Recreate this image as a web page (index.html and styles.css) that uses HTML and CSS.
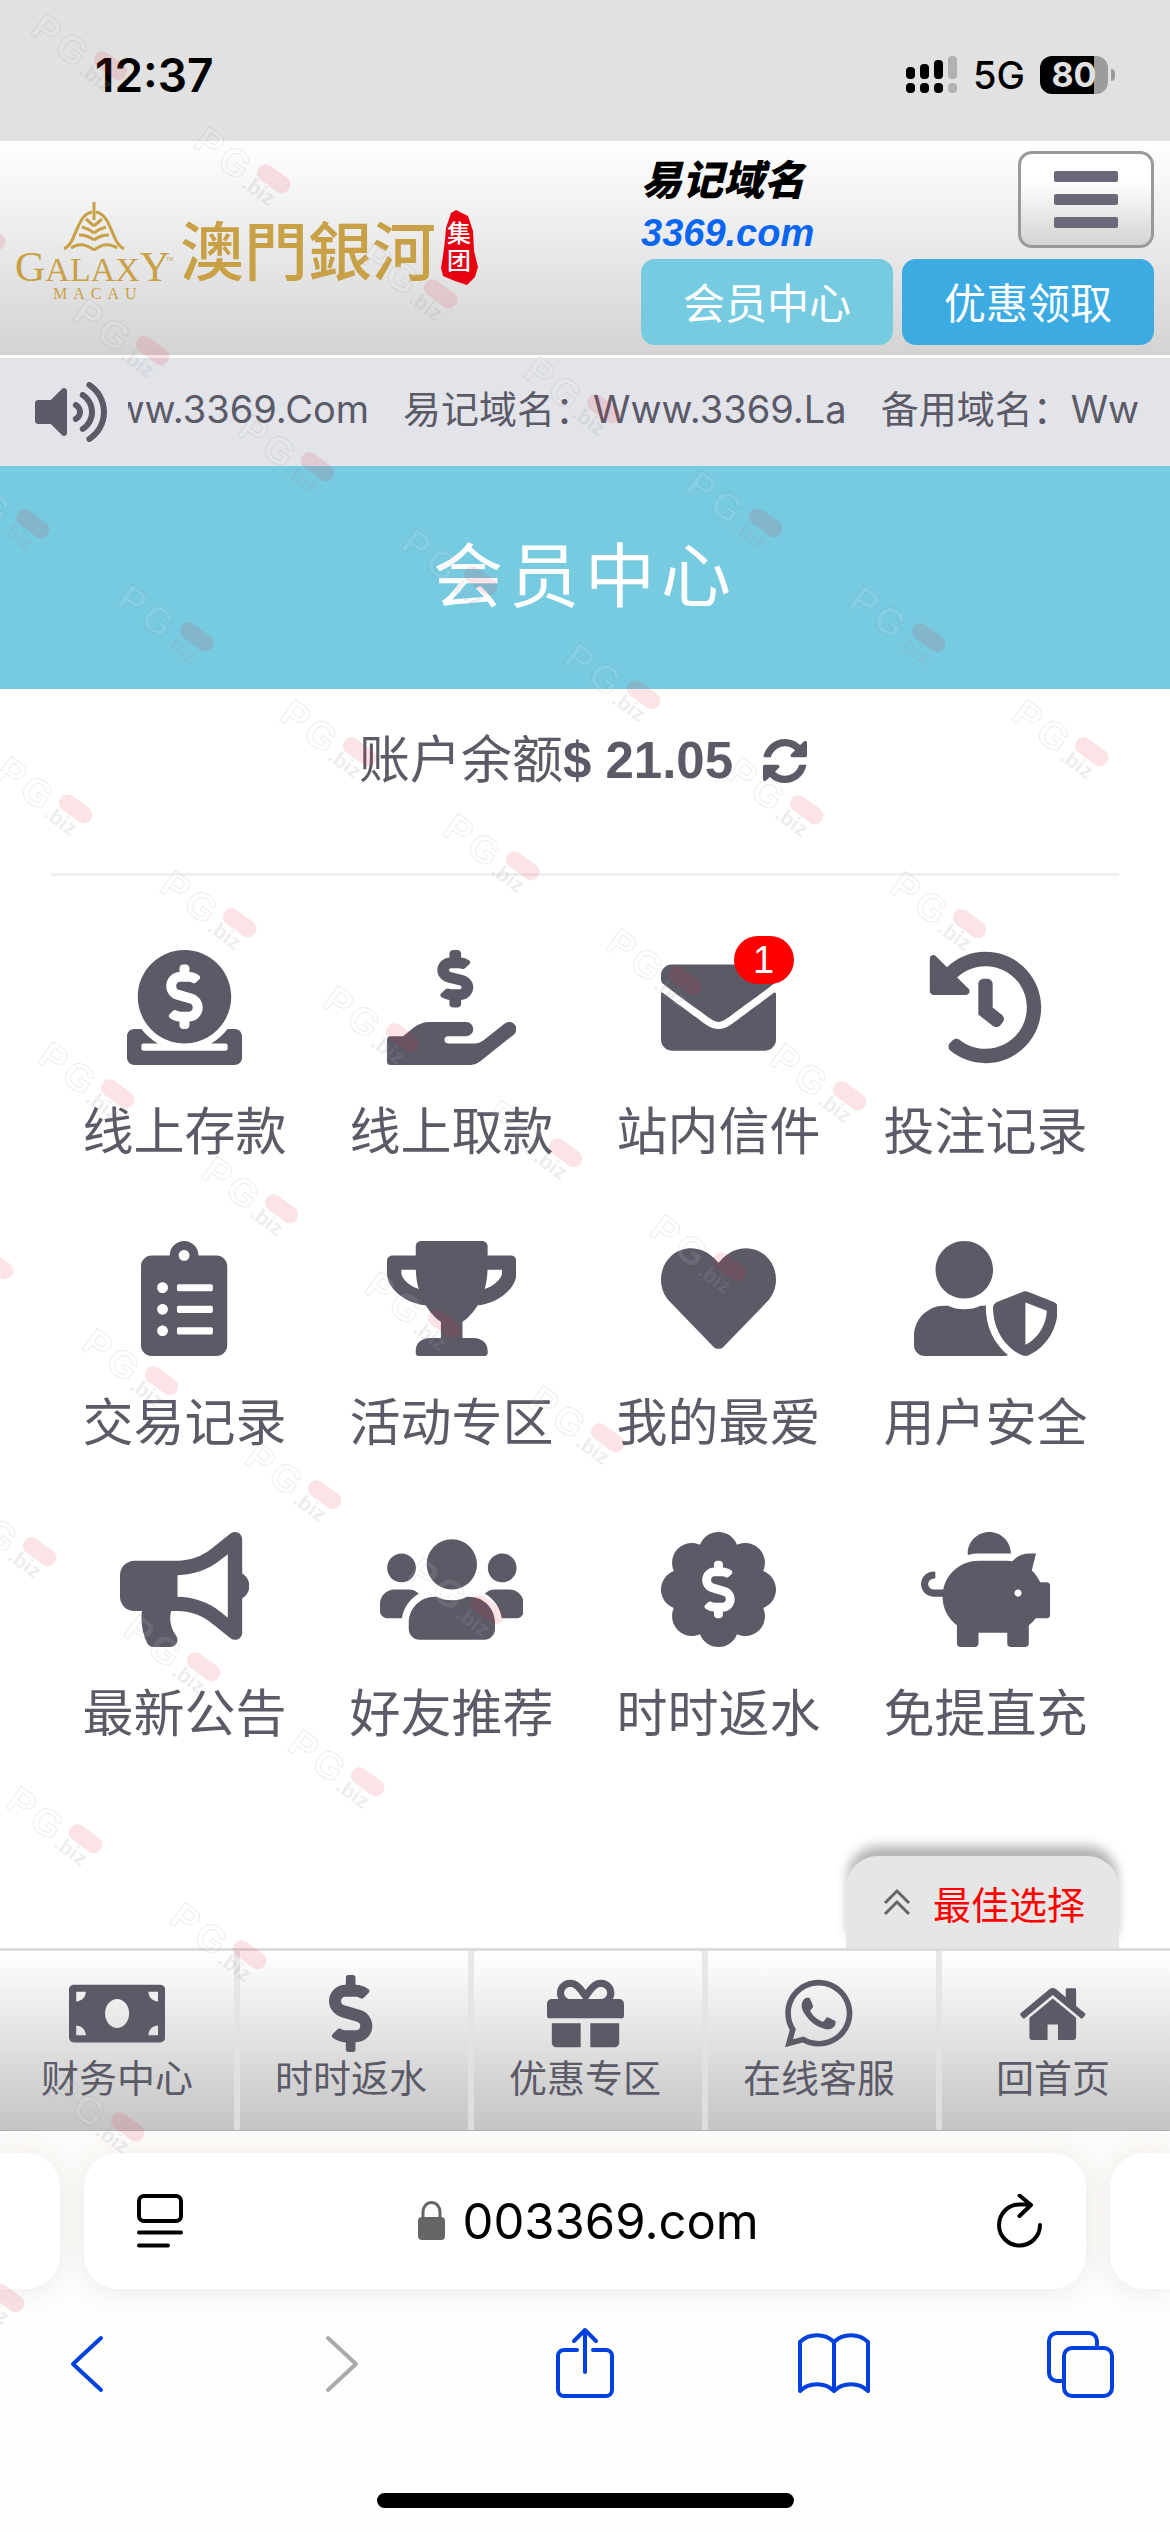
FILE: index.html
```html
<!DOCTYPE html>
<html lang="zh-CN">
<head>
    <meta charset="UTF-8">
    <meta name="viewport" content="width=device-width, initial-scale=1.0">
    <title>会员中心</title>
    <link rel="stylesheet" href="styles.css">
</head>
<body>

<div class="status-bar">
    <span class="status-time">12:37</span>
    <div class="status-right">
        <svg class="signal" viewBox="0 0 52 38" aria-hidden="true">
            <rect x="0" y="11" width="9" height="12" rx="4"/><rect x="14" y="8" width="9" height="15" rx="4"/><rect x="28" y="4" width="9" height="19" rx="4"/><rect class="dim" x="42" y="0" width="9" height="23" rx="4"/>
            <rect x="0" y="27" width="9" height="10" rx="4"/><rect x="14" y="27" width="9" height="10" rx="4"/><rect x="28" y="27" width="9" height="10" rx="4"/><rect class="dim" x="42" y="27" width="9" height="10" rx="4"/>
        </svg>
        <span class="network">5G</span>
        <span class="battery">80</span>
    </div>
</div>

<header class="header">
    <a href="#" class="logo" aria-label="澳門銀河集团">
        <svg viewBox="0 0 470 104">
            <g class="logo-mount">
                <path d="M78 3v18"/>
                <path d="M48 50c13-6 12-34 28-37M108 50c-13-6-12-34-28-37"/>
                <path d="M78 27l-8-7M78 27l8-7M78 34c-5-4-8-5-12-6M78 34c5-4 8-5 12-6M78 41c-5-4-10-5-15-5M78 41c5-4 10-5 15-5M78 51c-8-6-16-7-23-2M78 51c8-6 16-7 23-2"/>
            </g>
            <text class="logo-latin" x="-1" y="82"><tspan class="cap">G</tspan>ALAX<tspan class="cap">Y</tspan></text>
            <text class="logo-macau" x="37" y="100">MACAU</text>
            <text class="logo-tm" x="150" y="62">TM</text>
            <text class="logo-cjk" x="164" y="76">澳門銀河</text>
            <path class="seal" d="M435 14l5-3 12 6 5 15 1 20 4 16-3 10-8 8-12-4-12-5-2-8 2-12 2-16 1-12z"/>
            <text class="seal-text" x="431" y="43">集</text>
            <text class="seal-text" x="431" y="70">团</text>
        </svg>
    </a>
    <div class="header-right">
        <div class="header-top">
            <div class="domain">
                <strong>易记域名</strong>
                <a href="#">3369.com</a>
            </div>
            <button class="menu-btn" aria-label="菜单"><i></i><i></i><i></i></button>
        </div>
        <div class="header-buttons">
            <button class="btn btn-member">会员中心</button>
            <button class="btn btn-promo">优惠领取</button>
        </div>
    </div>
</header>

<div class="notice">
    <svg class="notice-icon" viewBox="0 0 576 512" aria-hidden="true"><path d="M215.03 71.05L126.06 160H24c-13.26 0-24 10.74-24 24v144c0 13.25 10.73 24 24 24h102.06l88.97 88.95c15.03 15.03 40.97 4.47 40.97-16.97V88.02c0-21.46-25.96-31.98-40.97-16.97zm233.32-51.08c-11.17-7.33-26.18-4.24-33.51 6.95-7.34 11.17-4.22 26.18 6.95 33.51 66.27 43.49 105.82 116.6 105.82 195.58 0 78.98-39.55 152.09-105.82 195.58-11.17 7.32-14.29 22.34-6.95 33.5 7.04 10.71 21.93 14.56 33.51 6.95C528.27 439.58 576 351.33 576 256S528.27 72.43 448.35 19.97zM480 256c0-63.53-32.06-121.94-85.77-156.24-11.19-7.14-26.03-3.82-33.12 7.46s-3.78 26.21 7.41 33.36C408.27 165.97 432 209.11 432 256s-23.73 90.02-63.48 115.42c-11.19 7.14-14.5 22.07-7.41 33.36 6.51 10.36 21.12 15.14 33.12 7.46C447.94 377.94 480 319.54 480 256zm-141.77-76.87c-11.58-6.33-26.19-2.16-32.61 9.45-6.39 11.61-2.16 26.2 9.45 32.61C327.98 228.28 336 241.63 336 256c0 14.38-8.02 27.72-20.92 34.81-11.61 6.41-15.84 21-9.45 32.61 6.43 11.66 21.05 15.8 32.61 9.45 28.23-15.55 45.77-45 45.77-76.88s-17.54-61.32-45.78-76.86z"/></svg>
    <div class="notice-window">
        <div class="notice-track">
            <span>Www.3369.Com</span>
            <span>易记域名：Www.3369.La</span>
            <span>备用域名：Www.3369.Cc</span>
        </div>
    </div>
</div>

<h1 class="page-title">会员中心</h1>

<main class="main">
    <div class="balance">
        <span>账户余额<b>$ 21.05</b></span>
        <button class="refresh" aria-label="刷新">
            <svg viewBox="0 0 1536 1536"><path d="M1511 928q0 5-1 7-64 268-268 434.500t-478 166.500q-146 0-282.500-55t-243.500-157l-129 129q-19 19-45 19t-45-19-19-45v-448q0-26 19-45t45-19h448q26 0 45 19t19 45-19 45l-137 137q71 66 161 102t187 36q134 0 250-65t186-179q11-17 53-117 8-23 30-23h192q13 0 22.500 9.500t9.500 22.500zm25-800v448q0 26-19 45t-45 19h-448q-26 0-45-19t-19-45 19-45l138-138q-148-137-349-137-134 0-250 65t-186 179q-11 17-53 117-8 23-30 23h-199q-13 0-22.500-9.500t-9.500-22.500v-7q65-268 270-434.500t480-166.500q146 0 284 55.500t245 156.500l130-129q19-19 45-19t45 19 19 45z"/></svg>
        </button>
    </div>

    <nav class="grid">
        <a href="#" class="grid-item">
            <svg viewBox="0 0 512 512"><path d="M256 416c114.900 0 208-93.100 208-208S370.900 0 256 0 48 93.100 48 208s93.100 208 208 208zM233.800 97.400V80.600c0-9.200 7.400-16.600 16.600-16.600h11.100c9.200 0 16.600 7.400 16.600 16.600v17c15.500.8 30.500 6.100 43 15.400 5.600 4.100 6.200 12.300 1.200 17.100L306 145.600c-3.800 3.700-9.500 3.800-14 1-5.400-3.400-11.400-5.100-17.800-5.100h-38.900c-9 0-16.300 8.200-16.300 18.300 0 8.200 5 15.500 12.100 17.600l62.300 18.700c25.700 7.700 43.700 32.400 43.700 60.100 0 34-26.400 61.500-59.100 62.400v16.800c0 9.200-7.400 16.600-16.600 16.600h-11.100c-9.200 0-16.600-7.400-16.600-16.600v-17c-15.500-.8-30.500-6.100-43-15.400-5.600-4.100-6.200-12.300-1.200-17.100l16.300-15.500c3.800-3.700 9.500-3.800 14-1 5.400 3.400 11.400 5.100 17.800 5.100h38.900c9 0 16.300-8.200 16.300-18.300 0-8.200-5-15.500-12.100-17.600l-62.300-18.700c-25.700-7.700-43.700-32.400-43.700-60.100.1-34 26.400-61.500 59.100-62.400zM480 352h-32.500c-19.600 26-44.600 47.700-73 64h63.800c5.300 0 9.600 3.600 9.600 8v16c0 4.400-4.300 8-9.600 8H73.600c-5.300 0-9.600-3.600-9.600-8v-16c0-4.400 4.300-8 9.600-8h63.800c-28.400-16.300-53.300-38-73-64H32c-17.700 0-32 14.300-32 32v96c0 17.700 14.300 32 32 32h448c17.700 0 32-14.300 32-32v-96c0-17.700-14.300-32-32-32z"/></svg>
            <span>线上存款</span>
        </a>
        <a href="#" class="grid-item">
            <svg viewBox="0 0 576 512"><path d="M271.060,144.300l54.270,14.300a8.590,8.590,0,0,1,6.630,8.100c0,4.600-4.090,8.400-9.120,8.400h-35.600a30,30,0,0,1-11.190-2.200c-5.240-2.200-11.280-1.700-15.300,2l-19,17.500a11.680,11.680,0,0,0-2.250,2.660,11.420,11.420,0,0,0,3.880,15.740,83.770,83.770,0,0,0,34.510,11.500V240c0,8.800,7.830,16,17.370,16h17.370c9.550,0,17.380-7.200,17.380-16V222.400c32.930-3.600,57.840-31,53.500-63-3.150-23-22.460-41.300-46.560-47.700L282.680,97.400a8.590,8.590,0,0,1-6.630-8.100c0-4.600,4.090-8.400,9.120-8.400h35.600A30,30,0,0,1,332,83.100c5.230,2.200,11.280,1.700,15.300-2l19-17.500A11.310,11.310,0,0,0,368.470,61a11.430,11.430,0,0,0-3.840-15.780,83.820,83.820,0,0,0-34.520-11.500V16c0-8.800-7.820-16-17.370-16H295.370C285.820,0,278,7.200,278,16V33.600c-32.890,3.600-57.850,31-53.510,63C227.630,119.600,247,137.900,271.060,144.300ZM565.270,328.100c-11.800-10.700-30.200-10-42.600,0L430.270,402a63.640,63.640,0,0,1-40,14H272a16,16,0,0,1,0-32h78.290c15.900,0,30.710-10.900,33.250-26.600a31.200,31.200,0,0,0,.46-5.460A32,32,0,0,0,352,320H192a117.660,117.660,0,0,0-74.100,26.290L71.400,384H16A16,16,0,0,0,0,400v96a16,16,0,0,0,16,16H372.770a64,64,0,0,0,40-14L564,377a32,32,0,0,0,1.280-48.900Z"/></svg>
            <span>线上取款</span>
        </a>
        <a href="#" class="grid-item">
            <svg viewBox="0 0 512 512"><path d="M502.300 190.800c3.900-3.100 9.700-.2 9.700 4.700V400c0 26.500-21.500 48-48 48H48c-26.500 0-48-21.500-48-48V195.600c0-5 5.700-7.800 9.700-4.700 22.400 17.400 52.100 39.500 154.100 113.600 21.100 15.400 56.700 47.800 92.200 47.600 35.700.3 72-32.800 92.300-47.600 102-74.100 131.600-96.300 154-113.700zM256 320c23.200.4 56.600-29.200 73.400-41.400 132.700-96.300 142.800-104.700 173.400-128.700 5.800-4.500 9.200-11.500 9.200-18.900v-19c0-26.500-21.500-48-48-48H48c-26.500 0-48 21.500-48 48v19c0 7.400 3.400 14.300 9.200 18.900 30.600 23.900 40.700 32.400 173.400 128.700 16.800 12.200 50.200 41.800 73.400 41.400z"/></svg>
            <em class="badge">1</em>
            <span>站内信件</span>
        </a>
        <a href="#" class="grid-item">
            <svg viewBox="0 0 512 512"><path d="M504 255.531c.253 136.640-111.180 248.372-247.820 248.468-59.015.042-113.223-20.530-155.822-54.911-11.077-8.940-11.905-25.541-1.839-35.607l11.267-11.267c8.609-8.609 22.353-9.551 31.891-1.984C173.062 425.135 212.781 440 256 440c101.705 0 184-82.311 184-184 0-101.705-82.311-184-184-184-48.814 0-93.149 18.969-126.068 49.932l50.754 50.754c10.080 10.080 2.941 27.314-11.313 27.314H24c-8.837 0-16-7.163-16-16V38.627c0-14.254 17.234-21.393 27.314-11.314l49.372 49.372C129.209 34.136 189.552 8 256 8c136.810 0 247.747 110.780 248 247.531zm-180.912 78.784l9.823-12.630c8.138-10.463 6.253-25.542-4.210-33.679L288 256.349V152c0-13.255-10.745-24-24-24h-16c-13.255 0-24 10.745-24 24v135.651l65.409 50.874c10.463 8.137 25.541 6.253 33.679-4.210z"/></svg>
            <span>投注记录</span>
        </a>
        <a href="#" class="grid-item">
            <svg viewBox="0 0 384 512"><path d="M336 64h-80c0-35.300-28.700-64-64-64s-64 28.700-64 64H48C21.500 64 0 85.500 0 112v352c0 26.500 21.500 48 48 48h288c26.500 0 48-21.500 48-48V112c0-26.500-21.500-48-48-48zM96 424c-13.300 0-24-10.700-24-24s10.700-24 24-24 24 10.700 24 24-10.700 24-24 24zm0-96c-13.300 0-24-10.700-24-24s10.700-24 24-24 24 10.700 24 24-10.700 24-24 24zm0-96c-13.300 0-24-10.700-24-24s10.700-24 24-24 24 10.700 24 24-10.700 24-24 24zm96-192c13.300 0 24 10.700 24 24s-10.700 24-24 24-24-10.700-24-24 10.700-24 24-24zm128 368c0 4.400-3.600 8-8 8H168c-4.400 0-8-3.600-8-8v-16c0-4.400 3.600-8 8-8h144c4.400 0 8 3.600 8 8v16zm0-96c0 4.400-3.600 8-8 8H168c-4.400 0-8-3.600-8-8v-16c0-4.400 3.600-8 8-8h144c4.400 0 8 3.600 8 8v16zm0-96c0 4.400-3.600 8-8 8H168c-4.400 0-8-3.600-8-8v-16c0-4.400 3.600-8 8-8h144c4.400 0 8 3.600 8 8v16z"/></svg>
            <span>交易记录</span>
        </a>
        <a href="#" class="grid-item">
            <svg viewBox="0 0 576 512"><path d="M552 64H448V24c0-13.300-10.700-24-24-24H152c-13.300 0-24 10.700-24 24v40H24C10.700 64 0 74.700 0 88v56c0 35.700 22.500 72.400 61.900 100.700 31.500 22.700 69.800 37.100 110 41.700C203.300 338.500 240 360 240 360v72h-48c-35.300 0-64 20.700-64 56v12c0 6.600 5.400 12 12 12h296c6.600 0 12-5.400 12-12v-12c0-35.300-28.700-56-64-56h-48v-72s36.700-21.500 68.100-73.600c40.300-4.600 78.600-19 110-41.700 39.300-28.300 61.900-65 61.900-100.700V88c0-13.300-10.700-24-24-24zM99.300 192.800C74.900 175.200 64 155.600 64 144v-16h64.200c1 32.600 5.800 61.200 12.800 86.200-15.100-5.200-29.200-12.400-41.700-21.400zM512 144c0 16.100-17.700 36.100-35.300 48.800-12.500 9-26.700 16.200-41.800 21.400 7-25 11.800-53.600 12.800-86.200H512v16z"/></svg>
            <span>活动专区</span>
        </a>
        <a href="#" class="grid-item">
            <svg viewBox="0 0 512 512"><path d="M462.300 62.600C407.500 15.900 326 24.300 275.700 76.200L256 96.500l-19.700-20.300C186.100 24.300 104.500 15.900 49.700 62.600c-62.800 53.600-66.100 149.800-9.900 207.900l193.500 199.800c12.500 12.900 32.800 12.900 45.300 0l193.500-199.800c56.300-58.100 53-154.300-9.800-207.900z"/></svg>
            <span>我的最爱</span>
        </a>
        <a href="#" class="grid-item">
            <svg viewBox="0 0 640 512"><path d="M622.300 271.100l-115.200-45c-4.100-1.600-12.600-3.700-22.200 0l-115.200 45c-10.700 4.200-17.700 14-17.700 24.900 0 111.600 68.700 188.800 132.900 213.900 9.600 3.700 18 1.600 22.200 0C558.400 489.900 640 420.500 640 296c0-10.900-7-20.700-17.700-24.900zM496 462.400V273.300l95.500 37.300c-5.600 87.100-60.900 135.400-95.500 151.800zM224 256c70.700 0 128-57.300 128-128S294.700 0 224 0 96 57.300 96 128s57.300 128 128 128zm96 40c0-2.500.8-4.800 1.100-7.200-2.500-.1-4.900-.8-7.500-.8h-16.700c-22.200 10.200-46.900 16-72.900 16s-50.600-5.800-72.900-16h-16.700C60.200 288 0 348.200 0 422.400V464c0 26.500 21.500 48 48 48h352c6.800 0 13.300-1.500 19.200-4-54-42.900-99.200-116.700-99.200-212z"/></svg>
            <span>用户安全</span>
        </a>
        <a href="#" class="grid-item">
            <svg viewBox="0 0 576 512"><path d="M576 240c0-23.630-12.950-44.040-32-55.120V32.010C544 23.260 537.020 0 512 0c-7.120 0-14.190 2.380-19.980 7.020l-85.030 68.030C364.280 109.190 310.660 128 256 128H64c-35.350 0-64 28.650-64 64v96c0 35.350 28.650 64 64 64h33.700c-1.390 10.480-2.180 21.140-2.180 32 0 39.770 9.260 77.350 25.560 110.940 5.190 10.690 16.520 17.060 28.400 17.060h74.280c26.050 0 41.690-29.840 25.900-50.560-16.400-21.520-26.150-48.360-26.150-77.440 0-11.110 1.620-21.790 4.410-32H256c54.660 0 108.280 18.810 150.980 52.950l85.030 68.030a32.023 32.023 0 0 0 19.980 7.020c24.920 0 32-22.780 32-32V295.130C563.050 284.040 576 263.630 576 240zm-96 141.420l-33.050-26.440C392.950 311.780 325.120 288 256 288v-96c69.120 0 136.950-23.780 190.950-66.980L480 98.580v282.840z"/></svg>
            <span>最新公告</span>
        </a>
        <a href="#" class="grid-item">
            <svg viewBox="0 0 640 512"><path d="M96 224c35.300 0 64-28.700 64-64s-28.700-64-64-64-64 28.700-64 64 28.700 64 64 64zm448 0c35.300 0 64-28.700 64-64s-28.700-64-64-64-64 28.700-64 64 28.700 64 64 64zm32 32h-64c-17.600 0-33.500 7.100-45.100 18.600 40.300 22.100 68.900 62 75.100 109.400h66c17.700 0 32-14.300 32-32v-32c0-35.300-28.700-64-64-64zm-256 0c61.900 0 112-50.100 112-112S381.900 32 320 32 208 82.100 208 144s50.100 112 112 112zm76.800 32h-8.300c-20.800 10-43.900 16-68.500 16s-47.600-6-68.500-16h-8.300C179.600 288 128 339.600 128 403.200V432c0 26.500 21.500 48 48 48h288c26.500 0 48-21.500 48-48v-28.800c0-63.600-51.600-115.200-115.200-115.200zm-223.700-13.400C161.500 263.100 145.600 256 128 256H64c-35.300 0-64 28.700-64 64v32c0 17.700 14.300 32 32 32h65.900c6.300-47.400 34.900-87.300 75.200-109.400z"/></svg>
            <span>好友推荐</span>
        </a>
        <a href="#" class="grid-item">
            <svg viewBox="0 0 512 512">
                <path d="M512 256c0-37.700-23.700-69.900-57.100-82.400 14.700-32.400 8.800-71.900-17.900-98.600-26.700-26.700-66.200-32.600-98.600-17.900C325.900 23.700 293.700 0 256 0s-69.900 23.700-82.400 57.100c-32.400-14.700-72-8.800-98.600 17.900-26.700 26.700-32.600 66.200-17.900 98.600C23.700 186.100 0 218.300 0 256s23.700 69.900 57.100 82.400c-14.700 32.400-8.800 72 17.900 98.600 26.600 26.600 66.100 32.700 98.600 17.900 12.500 33.300 44.700 57.100 82.400 57.100s69.900-23.700 82.400-57.100c32.600 14.800 72 8.700 98.600-17.900 26.700-26.700 32.600-66.200 17.900-98.600 33.400-12.500 57.100-44.700 57.100-82.400z"/>
                <path class="cut" transform="translate(28 71) scale(.89)" d="M233.800 97.400V80.600c0-9.200 7.400-16.600 16.600-16.600h11.100c9.200 0 16.600 7.400 16.600 16.600v17c15.500.8 30.500 6.100 43 15.400 5.600 4.100 6.200 12.300 1.200 17.100L306 145.600c-3.800 3.700-9.500 3.800-14 1-5.400-3.400-11.400-5.100-17.800-5.100h-38.900c-9 0-16.300 8.200-16.300 18.300 0 8.200 5 15.500 12.100 17.600l62.300 18.700c25.700 7.700 43.700 32.400 43.700 60.100 0 34-26.400 61.500-59.100 62.400v16.800c0 9.200-7.400 16.600-16.600 16.600h-11.100c-9.200 0-16.600-7.400-16.600-16.600v-17c-15.500-.8-30.500-6.100-43-15.400-5.600-4.100-6.200-12.300-1.200-17.100l16.300-15.500c3.800-3.700 9.500-3.800 14-1 5.400 3.400 11.400 5.100 17.800 5.100h38.900c9 0 16.300-8.200 16.300-18.300 0-8.200-5-15.500-12.100-17.600l-62.300-18.700c-25.700-7.700-43.700-32.400-43.700-60.100.1-34 26.400-61.500 59.100-62.400z"/>
            </svg>
            <span>时时返水</span>
        </a>
        <a href="#" class="grid-item">
            <svg viewBox="0 0 576 512"><path d="M560 224h-29.500c-8.800-20-21.600-37.700-37.400-52.500L512 96h-32c-29.400 0-55.400 13.500-73 34.300-7.600-1.100-15.100-2.300-23-2.300H256c-77.400 0-141.900 55-156.800 128H56c-14.800 0-26.500-13.500-23.500-28.800C34.700 215.800 45.400 208 57 208h1c3.300 0 6-2.700 6-6v-20c0-3.300-2.700-6-6-6-28.500 0-53.900 20.400-57.500 48.600C-3.900 258.800 22.700 288 56 288h40c0 52.200 25.400 98.100 64 127.300V496c0 8.800 7.200 16 16 16h64c8.800 0 16-7.200 16-16v-48h128v48c0 8.800 7.200 16 16 16h64c8.800 0 16-7.200 16-16v-80.700c11.800-8.900 22.300-19.400 31.300-31.300H560c8.800 0 16-7.200 16-16V240c0-8.800-7.200-16-16-16zm-128 64c-8.800 0-16-7.200-16-16s7.200-16 16-16 16 7.200 16 16-7.200 16-16 16zM256 96h128c5.400 0 10.700.4 15.900.8 0-.3.1-.5.1-.8 0-53-43-96-96-96s-96 43-96 96c0 2.100.5 4.100.6 6.200 15.200-3.900 31-6.200 47.400-6.200z"/></svg>
            <span>免提直充</span>
        </a>
    </nav>

    <button class="best-choice">
        <svg viewBox="0 0 28 28" aria-hidden="true"><path d="M2 15L14 3l12 12M2 26l12-12 12 12"/></svg>
        最佳选择
    </button>
</main>

<nav class="bottom-nav">
    <a href="#">
        <svg viewBox="0 0 640 512"><path d="M608 64H32C14.330 64 0 78.330 0 96v320c0 17.670 14.330 32 32 32h576c17.670 0 32-14.330 32-32V96c0-17.670-14.330-32-32-32zM48 400v-64c35.350 0 64 28.650 64 64H48zm0-224v-64h64c0 35.350-28.650 64-64 64zm272 176c-44.190 0-80-42.990-80-96 0-53.020 35.820-96 80-96s80 42.980 80 96c0 53.030-35.830 96-80 96zm272 48h-64c0-35.350 28.650-64 64-64v64zm0-224c-35.350 0-64-28.650-64-64h64v64z"/></svg>
        财务中心
    </a>
    <a href="#">
        <svg viewBox="0 0 288 512"><path d="M209.200 233.400l-108-31.600C88.700 198.200 80 186.500 80 173.500c0-16.300 13.200-29.500 29.500-29.500h66.300c12.200 0 24.200 3.700 34.200 10.500 6.100 4.100 14.300 3.100 19.500-2l34.800-34c7.100-6.900 6.100-18.400-1.800-24.500C238 74.800 207.400 64.100 176 64V16c0-8.800-7.200-16-16-16h-32c-8.800 0-16 7.200-16 16v48h-2.500C45.800 64-5.400 118.700.5 183.600c4.200 46.100 39.400 83.600 83.800 96.600l102.500 30c12.500 3.700 21.200 15.300 21.200 28.300 0 16.300-13.200 29.500-29.500 29.500h-66.300C100 368 88 364.300 78 357.500c-6.100-4.100-14.300-3.100-19.500 2l-34.800 34c-7.100 6.900-6.100 18.400 1.800 24.500 24.500 19.200 55.100 29.900 86.500 30v48c0 8.800 7.200 16 16 16h32c8.800 0 16-7.200 16-16v-48.200c46.600-.9 90.300-28.600 105.700-72.700 21.500-61.600-14.600-124.800-72.500-141.700z"/></svg>
        时时返水
    </a>
    <a href="#">
        <svg viewBox="0 0 512 512"><path d="M32 448c0 17.700 14.300 32 32 32h160V320H32v128zm256 32h160c17.700 0 32-14.300 32-32V320H288v160zm192-320h-42.100c6.200-12.100 10.100-25.500 10.100-40 0-48.500-39.500-88-88-88-41.600 0-68.500 21.300-103 68.300-34.500-47-61.400-68.300-103-68.300-48.500 0-88 39.500-88 88 0 14.500 3.800 27.900 10.100 40H32c-17.700 0-32 14.300-32 32v80c0 8.800 7.200 16 16 16h480c8.800 0 16-7.200 16-16v-80c0-17.700-14.300-32-32-32zm-326.100 0c-22.100 0-40-17.900-40-40s17.900-40 40-40c19.900 0 34.600 3.300 86.100 80h-86.100zm206.100 0h-86.100c51.400-76.500 65.700-80 86.100-80 22.100 0 40 17.900 40 40s-17.900 40-40 40z"/></svg>
        优惠专区
    </a>
    <a href="#">
        <svg viewBox="0 0 448 512"><path d="M380.900 97.100C339 55.100 283.200 32 223.900 32c-122.400 0-222 99.600-222 222 0 39.100 10.200 77.300 29.600 111L0 480l117.700-30.900c32.400 17.700 68.900 27 106.100 27h.1c122.300 0 224.100-99.600 224.100-222 0-59.300-25.200-115-67.100-157zm-157 341.600c-33.200 0-65.700-8.900-94-25.700l-6.700-4-69.800 18.300L72 359.200l-4.400-7c-18.500-29.400-28.200-63.300-28.200-98.200 0-101.700 82.800-184.500 184.600-184.500 49.300 0 95.600 19.200 130.400 54.100 34.800 34.900 56.200 81.200 56.100 130.500 0 101.800-84.900 184.600-186.600 184.600zm101.200-138.200c-5.500-2.800-32.800-16.200-37.900-18-5.100-1.900-8.800-2.800-12.500 2.800-3.700 5.600-14.300 18-17.600 21.800-3.200 3.700-6.500 4.200-12 1.400-32.600-16.300-54-29.100-75.500-66-5.700-9.800 5.700-9.100 16.300-30.300 1.800-3.700.9-6.900-.5-9.700-1.400-2.800-12.500-30.100-17.100-41.200-4.500-10.800-9.100-9.300-12.500-9.500-3.200-.2-6.900-.2-10.600-.2-3.700 0-9.700 1.400-14.800 6.900-5.100 5.600-19.400 19-19.400 46.300 0 27.300 19.900 53.700 22.600 57.400 2.800 3.700 39.100 59.700 94.800 83.800 35.200 15.200 49 16.500 66.600 13.900 10.700-1.600 32.800-13.400 37.400-26.400 4.600-13 4.600-24.100 3.200-26.400-1.300-2.500-5-3.900-10.500-6.600z"/></svg>
        在线客服
    </a>
    <a href="#">
        <svg viewBox="-100 -68 1864 1900"><path d="M1408 992v480q0 26-19 45t-45 19h-384v-384h-256v384h-384q-26 0-45-19t-19-45v-480q0-1 .5-3t.5-3l575-474 575 474q1 2 1 6zm223-69l-62 74q-8 9-21 11h-3q-13 0-21-7l-692-577-692 577q-12 8-24 7-13-2-21-11l-62-74q-8-10-7-23.500t11-21.500l719-599q32-26 76-26t76 26l244 204v-195q0-14 9-23t23-9h192q14 0 23 9t9 23v408l219 182q10 8 11 21.500t-7 23.500z"/></svg>
        回首页
    </a>
</nav>

<footer class="browser">
    <div class="address-row">
        <div class="tab-peek"></div>
        <div class="address-bar">
            <button aria-label="页面设置"><svg class="line-icon" viewBox="0 0 46 54"><rect x="2" y="2" width="42" height="25" rx="5"/><path d="M2 38.500h42M2 51.500h29"/></svg></button>
            <label class="address">
                <svg viewBox="0 0 27 40" aria-hidden="true"><rect x="0" y="16" width="27" height="23" rx="4"/><path d="M5 18v-7a8.500 9.500 0 0 1 17 0v7"/></svg>
                <input type="text" value="003369.com" aria-label="网址">
            </label>
            <button aria-label="重新载入"><svg class="line-icon" viewBox="0 0 46 54"><path d="M43 31a20.500 20.500 0 1 1-20.500-20.500h11M22.500 1.500L34 11 22.500 22"/></svg></button>
        </div>
        <div class="tab-peek"></div>
    </div>
    <div class="toolbar">
        <button aria-label="后退"><svg viewBox="0 0 72 72"><path d="M49 11L21 37l28 26"/></svg></button>
        <button aria-label="前进" disabled><svg viewBox="0 0 72 72"><path d="M27 11l28 26-28 26"/></svg></button>
        <button aria-label="共享"><svg viewBox="0 0 72 72"><path d="M28 23H15a6 6 0 0 0-6 6v34a6 6 0 0 0 6 6h42a6 6 0 0 0 6-6V29a6 6 0 0 0-6-6H44M36 45V3M25 14L36 3l11 11"/></svg></button>
        <button aria-label="书签"><svg viewBox="0 0 72 72"><path d="M36 15C27 6 11 6 2 15v49c9-9 25-9 34 0 9-9 25-9 34 0V15C61 6 45 6 36 15zv49"/></svg></button>
        <button aria-label="标签页"><svg viewBox="0 0 72 72"><rect x="18" y="21" width="48" height="48" rx="8"/><path d="M18 54h-7a8 8 0 0 1-8-8V14a8 8 0 0 1 8-8h32a8 8 0 0 1 8 8v7"/></svg></button>
    </div>
    <div class="home-indicator"></div>
</footer>

<svg class="watermark" aria-hidden="true">
    <defs>
        <g id="mark">
            <g transform="translate(14 13) rotate(36)">
                <text class="wm-letter" x="-13" y="13">P</text>
                <text class="wm-letter" x="17" y="14">G</text>
                <rect class="wm-pill" x="54" y="-17" width="37" height="17" rx="8"/>
                <text class="wm-biz" x="50" y="17">.biz</text>
            </g>
        </g>
    </defs>
    <use href="#mark" x="33" y="17"/><use href="#mark" x="196" y="130"/><use href="#mark" x="363" y="245"/><use href="#mark" x="526" y="360"/><use href="#mark" x="688" y="474"/><use href="#mark" x="851" y="589"/><use href="#mark" x="1014" y="703"/>
    <use href="#mark" x="-89" y="187"/><use href="#mark" x="75" y="302"/><use href="#mark" x="240" y="418"/><use href="#mark" x="403" y="532"/><use href="#mark" x="566" y="646"/><use href="#mark" x="729" y="761"/><use href="#mark" x="892" y="875"/>
    <use href="#mark" x="-45" y="475"/><use href="#mark" x="119" y="588"/><use href="#mark" x="282" y="703"/><use href="#mark" x="445" y="817"/><use href="#mark" x="608" y="932"/><use href="#mark" x="772" y="1047"/>
    <use href="#mark" x="-2" y="760"/><use href="#mark" x="162" y="874"/><use href="#mark" x="325" y="989"/><use href="#mark" x="488" y="1104"/><use href="#mark" x="652" y="1218"/>
    <use href="#mark" x="40" y="1045"/><use href="#mark" x="204" y="1160"/><use href="#mark" x="367" y="1275"/><use href="#mark" x="530" y="1389"/>
    <use href="#mark" x="-81" y="1216"/><use href="#mark" x="84" y="1332"/><use href="#mark" x="247" y="1446"/><use href="#mark" x="410" y="1561"/>
    <use href="#mark" x="-38" y="1503"/><use href="#mark" x="126" y="1618"/><use href="#mark" x="290" y="1733"/>
    <use href="#mark" x="8" y="1790"/><use href="#mark" x="172" y="1906"/><use href="#mark" x="50" y="2078"/><use href="#mark" x="-70" y="2249"/>
</svg>

</body>
</html>
```
FILE: styles.css
```css
* {
    box-sizing: border-box;
}
body {
    position: relative;
    display: flex;
    flex-direction: column;
    min-height: 100vh;
    margin: 0;
    background-color: #fff;
    color: #5b5a67;
    font-family: "Liberation Sans", "Noto Sans CJK SC", sans-serif;
    font-size: 38px;
    overflow-x: hidden;
}
a {
    color: inherit;
    text-decoration: none;
}
button, input {
    margin: 0;
    padding: 0;
    border: none;
    background: none;
    color: inherit;
    font: inherit;
}
svg {
    display: block;
    fill: currentColor;
}

/* phone status bar */
.status-bar {
    display: flex;
    justify-content: space-between;
    align-items: center;
    height: 141px;
    padding: 8px 55px 0 95px;
    background-color: #e1e1e1;
    color: #000;
    font-family: Inter, sans-serif;
}
.status-time {
    font-size: 46px;
    font-weight: 600;
}
.status-right {
    display: flex;
    align-items: center;
    gap: 15px;
}
.signal {
    width: 52px;
    height: 38px;
}
.signal .dim {
    fill: #b1b1b1;
}
.network {
    font-weight: 500;
}
.battery {
    position: relative;
    width: 68px;
    margin-right: 7px;
    border-radius: 12px;
    background: linear-gradient(to right, #000 54px, #9c9c9c 54px);
    color: #e1e1e1;
    font-size: 34px;
    font-weight: 700;
    line-height: 38px;
    text-align: center;
}
.battery::after {
    content: "";
    position: absolute;
    top: 13px;
    right: -7px;
    width: 4px;
    height: 12px;
    border-radius: 0 4px 4px 0;
    background-color: #9c9c9c;
}

/* header */
.header {
    display: flex;
    justify-content: space-between;
    padding: 10px 16px;
    border-bottom: 3px solid #fff;
    background: linear-gradient(#fff, #d3d3d3) padding-box;
}
.logo {
    padding-top: 48px;
}
.logo svg {
    width: 470px;
    height: 104px;
    fill: #c8a046;
}
.logo-mount {
    fill: none;
    stroke: #c8a046;
    stroke-width: 3;
}
.logo-latin {
    font-family: "Liberation Serif", serif;
    font-size: 34px;
}
.logo-latin .cap {
    font-size: 42px;
}
.logo-macau {
    font-family: "Liberation Serif", serif;
    font-size: 16px;
    letter-spacing: 6px;
}
.logo-tm {
    font-size: 5px;
}
.logo-cjk {
    font-family: "Noto Sans CJK TC", sans-serif;
    font-size: 64px;
    font-weight: 500;
}
.logo .seal {
    fill: #e60012;
}
.seal-text {
    fill: #fff;
    font-family: "Noto Sans CJK SC", sans-serif;
    font-size: 24px;
    font-weight: 500;
}
.header-right {
    display: flex;
    flex-direction: column;
    gap: 11px;
    width: 513px;
}
.header-top {
    display: flex;
    justify-content: space-between;
}
.domain {
    display: flex;
    flex-direction: column;
    font-style: italic;
    font-weight: bold;
}
.domain strong {
    color: #000;
    font-size: 41px;
    line-height: 60px;
}
.domain a {
    color: #0a66f0;
    line-height: 44px;
    margin-bottom: -7px;
}
.menu-btn {
    display: flex;
    flex-direction: column;
    justify-content: center;
    align-items: center;
    gap: 12px;
    width: 136px;
    height: 97px;
    border: 3px solid #999;
    border-radius: 14px;
    background: linear-gradient(#fff 30%, #d3d3d1);
}
.menu-btn i {
    width: 64px;
    height: 11px;
    border-radius: 2px;
    background-color: #696979;
}
.header-buttons {
    display: grid;
    grid-template-columns: 1fr 1fr;
    gap: 9px;
}
.btn {
    height: 86px;
    padding-bottom: 3px;
    border-radius: 14px;
    color: #fff;
    font-size: 42px;
}
.btn-member {
    background-color: #76cbe1;
}
.btn-promo {
    background-color: #3cabe2;
}

/* scrolling notice */
.notice {
    display: flex;
    align-items: center;
    gap: 21px;
    height: 108px;
    padding: 0 31px 0 35px;
    background-color: #e2e4ea;
    font-family: Inter, "Noto Sans CJK SC", sans-serif;
}
.notice-icon {
    flex: none;
    width: 72px;
    height: 64px;
}
.notice-window {
    flex: 1;
    overflow: hidden;
}
.notice-track {
    display: flex;
    align-items: baseline;
    gap: 34px;
    margin-left: -52px;
    line-height: 60px;
    padding-bottom: 6px;
    white-space: nowrap;
}

.page-title {
    margin: 0;
    padding: 62px 0 61px;
    background-color: #76cbe1;
    color: #fff;
    font-size: 70px;
    font-weight: normal;
    line-height: 100px;
    letter-spacing: 6px;
    text-align: center;
}

/* member centre */
.main {
    display: flex;
    flex: 1;
    flex-direction: column;
    padding: 0 51px;
}
.balance {
    display: flex;
    justify-content: center;
    align-items: center;
    gap: 30px;
    padding: 42px 4px 82px 0;
    border-bottom: 3px solid #f0f0f0;
    font-size: 51px;
    line-height: 60px;
}
.refresh svg {
    width: 44px;
    height: 44px;
}
.grid {
    display: grid;
    grid-template-columns: repeat(4, 1fr);
    row-gap: 78px;
    padding-top: 74px;
}
.grid-item {
    position: relative;
    display: flex;
    flex-direction: column;
    align-items: center;
    gap: 38px;
    font-size: 51px;
    line-height: 60px;
}
.grid-item svg {
    height: 115px;
}
.grid-item .cut {
    fill: #fff;
}
.badge {
    position: absolute;
    top: -14px;
    left: 50%;
    width: 60px;
    margin-left: 15px;
    border-radius: 24px;
    background-color: #f00;
    color: #fff;
    font-size: 38px;
    font-style: normal;
    line-height: 48px;
    text-align: center;
}
.best-choice {
    display: flex;
    align-items: center;
    align-self: flex-end;
    gap: 22px;
    height: 92px;
    margin-top: auto;
    padding: 0 34px 0 37px;
    border-radius: 32px 32px 0 0;
    background-color: #e6e6e6;
    box-shadow: 0 -12px 12px -2px rgba(0, 0, 0, 0.3);
    color: #f00;
}
.best-choice svg {
    width: 28px;
    height: 28px;
    fill: none;
    stroke: #666;
    stroke-width: 3;
}

/* site bottom navigation */
.bottom-nav {
    display: grid;
    grid-template-columns: repeat(5, 1fr);
    position: relative;
    border-top: 3px solid #dcdcdc;
    border-bottom: 1px solid #b3afae;
    background: linear-gradient(#fff, #c4c4c5);
}
.bottom-nav a {
    display: flex;
    flex-direction: column;
    align-items: center;
    padding: 24px 0;
    line-height: 54px;
}
.bottom-nav a + a {
    box-shadow: inset 6px 0 0 rgba(226, 226, 226, 0.8);
}
.bottom-nav svg {
    height: 77px;
}

/* browser chrome */
.browser {
    display: flex;
    flex-direction: column;
    height: 401px;
    padding-top: 22px;
    background: linear-gradient(#fdfbf9, #fefefd 50%);
    color: #000;
    font-family: Inter, sans-serif;
}
.address-row {
    display: grid;
    grid-template-columns: 60px 1fr 60px;
    gap: 24px;
    height: 136px;
}
.tab-peek, .address-bar {
    border-radius: 34px;
    background-color: #fff;
    box-shadow: 0 3px 28px rgba(90, 80, 70, 0.11);
}
.tab-peek:first-child {
    border-radius: 0 34px 34px 0;
}
.tab-peek:last-child {
    border-radius: 34px 0 0 34px;
}
.address-bar {
    display: flex;
    justify-content: space-between;
    align-items: center;
    padding: 0 43px 0 53px;
}
.line-icon {
    width: 46px;
    height: 54px;
    fill: none;
    stroke: #000;
    stroke-width: 4;
    stroke-linecap: round;
    stroke-linejoin: round;
}
.address {
    display: flex;
    align-items: center;
    gap: 18px;
}
.address svg {
    width: 27px;
    height: 40px;
    fill: #666568;
}
.address path {
    fill: none;
    stroke: #666568;
    stroke-width: 3;
}
.address input {
    width: 300px;
    font-size: 49px;
}
.toolbar {
    display: flex;
    justify-content: space-between;
    padding: 38px 52px 0;
}
.toolbar svg {
    width: 72px;
    height: 72px;
    fill: none;
    stroke: #0040dd;
    stroke-width: 4;
    stroke-linecap: round;
    stroke-linejoin: round;
}
.toolbar button:disabled svg {
    stroke: #aaa;
}
.home-indicator {
    align-self: center;
    width: 417px;
    height: 15px;
    margin: auto 0 24px;
    border-radius: 8px;
    background-color: #000;
}

/* faint mark laid over the whole page */
.watermark {
    position: absolute;
    top: 0;
    left: 0;
    width: 100%;
    height: 100%;
    pointer-events: none;
}
.wm-letter {
    fill: rgba(255, 255, 255, 0.1);
    stroke: rgba(90, 90, 100, 0.13);
    stroke-width: 1;
    font-size: 38px;
    font-weight: bold;
}
.wm-pill {
    fill: rgba(225, 40, 60, 0.13);
}
.wm-biz {
    fill: rgba(160, 160, 170, 0.2);
    font-size: 21px;
    font-weight: bold;
}
```
